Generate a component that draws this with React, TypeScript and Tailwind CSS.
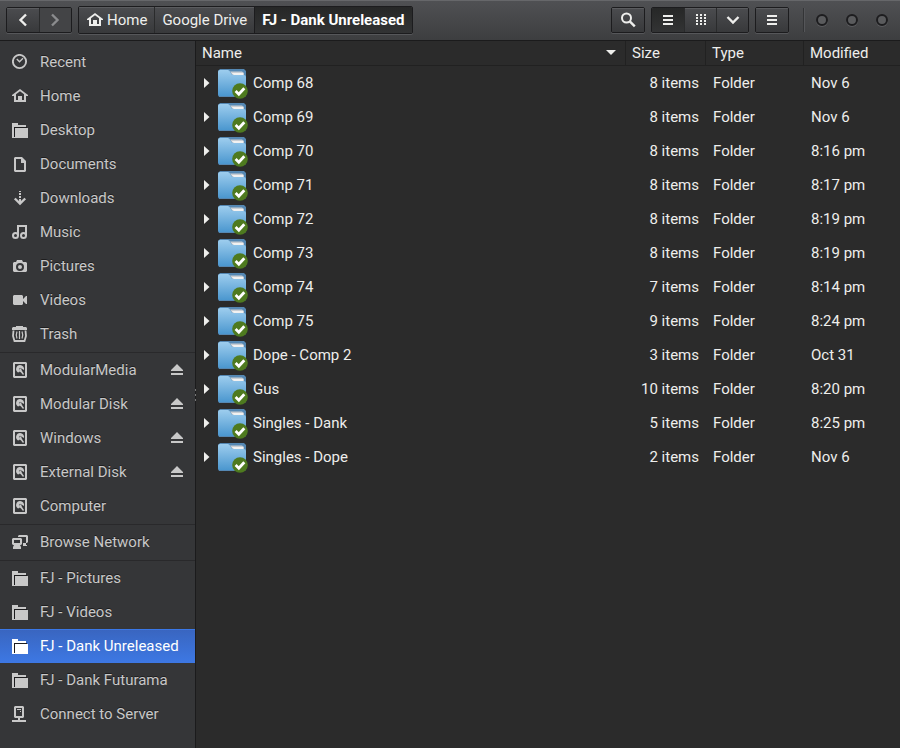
import { useState } from "react";
import type { ReactNode } from "react";
import clsx from "clsx";

const icons: Record<string, ReactNode> = {
    recent: (
        <>
            <circle cx="7.5" cy="7.5" r="6.6" fill="none" stroke="currentColor" strokeWidth="1.9" />
            <path d="M4.8 5l2.7 2.7L11 4.2" fill="none" stroke="currentColor" strokeWidth="1.4" />
        </>
    ),
    home: (
        <path d="M8 1L0 7v1h2v6h12V8h2V7zM8 3.2L12 6.3V12h-2V8H6v4H4V6.3z" fillRule="evenodd" />
    ),
    folder: (
        <>
            <path d="M0 1h6v2h8v2H2v10h1v1H0z" />
            <path d="M2 5h13v1H3v9H2z" fill="#1c1c1e" />
            <path d="M3 6h13v10H3z" />
        </>
    ),
    document: <path d="M3 1h7l4 4v10l-1 1H3l-1-1V2zM4 3v11h8V7H9V3z" fillRule="evenodd" />,
    download: (
        <>
            <path d="M7 1h2v1H7zM7 3h2v2H7zM7 6h2v2H7zM7 9h2v3H7z" />
            <path d="M2.8 8.5L8 13.5L13.2 8.5" fill="none" stroke="currentColor" strokeWidth="2.4" />
        </>
    ),
    music: (
        <>
            <path d="M5 1h10v11h-2V3H7v9H5z" />
            <circle cx="3.5" cy="11.5" r="2.5" fill="none" stroke="currentColor" strokeWidth="2" />
            <circle cx="11.5" cy="11.5" r="2.5" fill="none" stroke="currentColor" strokeWidth="2" />
        </>
    ),
    camera: (
        <path
            d="M5 2h5l1 2h3l1 1v8l-1 1H2l-1-1V5l1-1h2zM8 5a4 4 0 1 0 0 8a4 4 0 0 0 0-8zM8 7a2 2 0 1 1 0 4a2 2 0 0 1 0-4z"
            fillRule="evenodd"
        />
    ),
    video: <path d="M2 3h8l1 1v3l3-3h1v8h-1l-3-3v3l-1 1H2l-1-1V4z" />,
    trash: (
        <>
            <path d="M4 0h7v1h3l1 1v2H0V2l1-1h3z" />
            <path d="M1.5 4.5L1 10l1.5 5h10L14 10l-.5-5.5" fill="none" stroke="currentColor" strokeWidth="1.8" />
            <path d="M5 5.5q-1.5 3.5 0 7M7.5 5v8M10 5.5q1.500 3.5 0 7" fill="none" stroke="currentColor" strokeWidth="1.2" />
        </>
    ),
    disk: (
        <>
            <path d="M2 0h12l1 1v14l-1 1H2l-1-1V1zM3 2v12h10V2z" fillRule="evenodd" />
            <path d="M8 3a4 4 0 0 0-2 7.400l1.6-.4V8.3L6.8 7L8 5.8l1.3.8L12 8a4 4 0 0 0-4-5z" />
            <path d="M7.5 6.5H9L10 9l2 3l-1 1l-2-2.5L7 9z" />
        </>
    ),
    network: (
        <>
            <path d="M6 3V2l1-1h8l1 1v6l-1 1h-1v2h1v1h-4V9h3V3z" />
            <path d="M1 4h8l1 1v5l-1 1H8l1 2v2H1v-2l1-2H1l-1-1V5zM2 6v3h6V6z" fillRule="evenodd" />
        </>
    ),
    server: (
        <>
            <path d="M3 0h8l1 1v10l-1 1H8v2h6v2H0v-2h6v-2H3l-1-1V1zM4 2v8h6V2z" fillRule="evenodd" />
            <path d="M5 3h4v1H5zM8 5h1v1H8z" />
        </>
    ),
};

function Icon({ name }: { name: string }) {
    return (
        <svg className="size-4 shrink-0" viewBox="0 0 16 16" fill="currentColor" aria-hidden="true">
            {icons[name]}
        </svg>
    );
}

const places = [
    [
        { label: "Recent", icon: "recent" },
        { label: "Home", icon: "home" },
        { label: "Desktop", icon: "folder" },
        { label: "Documents", icon: "document" },
        { label: "Downloads", icon: "download" },
        { label: "Music", icon: "music" },
        { label: "Pictures", icon: "camera" },
        { label: "Videos", icon: "video" },
        { label: "Trash", icon: "trash" },
    ],
    [
        { label: "ModularMedia", icon: "disk", eject: true },
        { label: "Modular Disk", icon: "disk", eject: true },
        { label: "Windows", icon: "disk", eject: true },
        { label: "External Disk", icon: "disk", eject: true },
        { label: "Computer", icon: "disk" },
    ],
    [{ label: "Browse Network", icon: "network" }],
    [
        { label: "FJ - Pictures", icon: "folder" },
        { label: "FJ - Videos", icon: "folder" },
        { label: "FJ - Dank Unreleased", icon: "folder" },
        { label: "FJ - Dank Futurama", icon: "folder" },
        { label: "Connect to Server", icon: "server" },
    ],
] as { label: string; icon: string; eject?: boolean }[][];

const files = [
    { name: "Comp 68", size: "8 items", modified: "Nov 6" },
    { name: "Comp 69", size: "8 items", modified: "Nov 6" },
    { name: "Comp 70", size: "8 items", modified: "8:16 pm" },
    { name: "Comp 71", size: "8 items", modified: "8:17 pm" },
    { name: "Comp 72", size: "8 items", modified: "8:19 pm" },
    { name: "Comp 73", size: "8 items", modified: "8:19 pm" },
    { name: "Comp 74", size: "7 items", modified: "8:14 pm" },
    { name: "Comp 75", size: "9 items", modified: "8:24 pm" },
    { name: "Dope - Comp 2", size: "3 items", modified: "Oct 31" },
    { name: "Gus", size: "10 items", modified: "8:20 pm" },
    { name: "Singles - Dank", size: "5 items", modified: "8:25 pm" },
    { name: "Singles - Dope", size: "2 items", modified: "Nov 6" },
];

const group = "flex overflow-hidden rounded-xs border border-[#1c1c1e] text-[#eeeeec] shadow-[0_1px_0_#56575a]";
const raised = "bg-linear-to-b from-[#4b4c4f] to-[#38393b] shadow-[inset_0_1px_0_#5b5c5f]";
const pressed = "bg-linear-to-b from-[#262727] to-[#323334]";
const toolButton = "flex h-6 w-8 items-center justify-center";

function Toolbar() {
    const [view, setView] = useState("list");

    return (
        <header className="flex h-[41px] shrink-0 items-center border-b border-[#1b1b1c] bg-linear-to-b from-[#505154] to-[#3d3e40] px-1.5 shadow-[inset_0_1px_0_#66676a]">
            <div className={clsx(group, "mr-1.5")}>
                <button aria-label="Back" className={clsx(toolButton, raised)}>
                    <svg className="size-4" viewBox="0 0 16 16" fill="none" stroke="currentColor" strokeWidth="2.4">
                        <path d="M11 2.5L5.5 8l5.5 5.5" />
                    </svg>
                </button>
                <button aria-label="Forward" disabled className={clsx(toolButton, "border-l border-[#2a2b2c] bg-[#434446] text-[#8b8c8e]")}>
                    <svg className="size-4" viewBox="0 0 16 16" fill="none" stroke="currentColor" strokeWidth="2.4">
                        <path d="M4 2.5L9.5 8L4 13.5" />
                    </svg>
                </button>
            </div>

            <nav aria-label="Path" className={group}>
                <a href="#home" className={clsx("flex h-[26px] items-center gap-1 pr-[7px] pl-2", raised)}>
                    <Icon name="home" />
                    Home
                </a>
                <a href="#drive" className={clsx("flex h-[26px] items-center border-l border-[#2a2b2c] px-[7px]", raised)}>
                    Google Drive
                </a>
                <a
                    href="#current"
                    aria-current="page"
                    className={clsx("flex h-[26px] items-center border-l border-[#1c1c1e] px-[7px] font-bold text-white", pressed)}
                >
                    FJ - Dank Unreleased
                </a>
            </nav>

            <div className="ml-auto flex items-center gap-1.5">
                <div className={group}>
                    <button aria-label="Search" className={clsx(toolButton, raised)}>
                        <svg className="size-4" viewBox="0 0 16 16" fill="none" stroke="currentColor" strokeWidth="2">
                            <circle cx="6.5" cy="6" r="4.5" />
                            <path d="M9.8 9.3l5 5" strokeWidth="2.4" />
                        </svg>
                    </button>
                </div>
                <div className={group}>
                    <button
                        aria-label="List view"
                        aria-pressed={view === "list"}
                        onClick={() => setView("list")}
                        className={clsx(toolButton, view === "list" ? pressed : raised)}
                    >
                        <svg className="size-4" viewBox="0 0 16 16" fill="currentColor">
                            <path d="M3 3h10v2H3zM3 7h10v2H3zM3 11h10v2H3z" />
                        </svg>
                    </button>
                    <button
                        aria-label="Icon view"
                        aria-pressed={view === "grid"}
                        onClick={() => setView("grid")}
                        className={clsx(toolButton, "border-l border-[#2a2b2c]", view === "grid" ? pressed : raised)}
                    >
                        <svg className="size-4" viewBox="0 0 16 16" fill="currentColor">
                            {[2, 5, 8, 11].map((y) =>
                                [3, 7, 11].map((x) => <rect key={`${x}-${y}`} x={x} y={y} width="2" height="2" />)
                            )}
                        </svg>
                    </button>
                    <button aria-label="View options" className={clsx(toolButton, "border-l border-[#2a2b2c]", raised)}>
                        <svg className="size-4" viewBox="0 0 16 16" fill="none" stroke="currentColor" strokeWidth="2.4">
                            <path d="M2.5 5L8 10.5L13.5 5" />
                        </svg>
                    </button>
                </div>
                <div className={group}>
                    <button aria-label="Menu" className={clsx(toolButton, raised)}>
                        <svg className="size-4" viewBox="0 0 16 16" fill="currentColor">
                            <path d="M3 3h10v2H3zM3 7h10v2H3zM3 11h10v2H3z" />
                        </svg>
                    </button>
                </div>
            </div>

            <div className="ml-3.5 flex items-center gap-[18px] border-l border-[#333436] py-1.5 pr-1.5 pl-3 shadow-[inset_1px_0_0_#555659]">
                {["Minimize", "Maximize", "Close"].map((label) => (
                    <button
                        key={label}
                        aria-label={label}
                        className="size-3 rounded-full border-2 border-[#1d1d1f] bg-[#5a5b5d] shadow-[0_1px_0_#5a5b5e]"
                    />
                ))}
            </div>
        </header>
    );
}

function Sidebar() {
    const [current, setCurrent] = useState("FJ - Dank Unreleased");

    return (
        <aside className="relative w-[196px] shrink-0 border-r border-[#1b1b1c] bg-[#353638] pt-1">
            {places.map((section, i) => (
                <ul key={i} className={clsx(i > 0 && "mt-px border-t border-[#29292b]")}>
                    {section.map((place) => (
                        <li
                            key={place.label}
                            className={clsx(
                                "flex h-[34px] items-center px-3",
                                current === place.label
                                    ? "bg-linear-to-b from-[#3965bf] to-[#3d78e4] text-white shadow-[inset_0_1px_0_#3a78e8]"
                                    : "text-[#c8c8c8] text-shadow-[0_-1px_0_#1e1e1f]"
                            )}
                        >
                            <a
                                href={`#${place.label}`}
                                onClick={() => setCurrent(place.label)}
                                className="flex flex-1 items-center gap-3 whitespace-nowrap"
                            >
                                <Icon name={place.icon} />
                                {place.label}
                            </a>
                            {place.eject && (
                                <button aria-label={`Eject ${place.label}`}>
                                    <svg className="h-4 w-3" viewBox="0 0 12 16" fill="currentColor">
                                        <path d="M6 2l6 6v1H0V8zM0 11h12v2H0z" />
                                    </svg>
                                </button>
                            )}
                        </li>
                    ))}
                </ul>
            ))}
            {/* splitter grip */}
            <div className="absolute top-1/2 -right-px flex -translate-y-1/2 flex-col gap-[3px]">
                <span className="h-0.5 w-px bg-[#777]" />
                <span className="h-0.5 w-px bg-[#777]" />
                <span className="h-0.5 w-px bg-[#777]" />
            </div>
        </aside>
    );
}

function FolderIcon() {
    return (
        <svg className="h-8 w-8 shrink-0" viewBox="0 0 32 32" aria-hidden="true">
            <defs>
                <linearGradient id="folder" x1="0" y1="0" x2="0" y2="1">
                    <stop offset="0" stopColor="#9dcdee" />
                    <stop offset="1" stopColor="#4b97cf" />
                </linearGradient>
            </defs>
            <path d="M3 2h24l2 2v24l-1 2H2l-1-2V4z" fill="#5588b3" />
            <path d="M13 4.5h12l2 1.500V10H17z" fill="#c9ced3" />
            <path d="M14.500 6H26v2H17z" fill="#f1f1f1" />
            <path d="M3 3h8q1.500 0 2.500 2.500t3 2.500h10q2.500 0 2.500 2v17q0 2-2 2H3q-2 0-2-2V5q0-2 2-2z" fill="url(#folder)" />
            <circle cx="23" cy="24" r="7.8" fill="#4e7a1f" />
            <path d="M18.6 24l3.200 3.200l5.500-6" fill="none" stroke="#fff" strokeWidth="2.8" />
        </svg>
    );
}

function FileTable() {
    const heading = "border-b border-[#212121] pl-1.5 text-left font-normal";

    return (
        <main className="min-w-0 flex-1 bg-[#2b2b2b] text-[#eeeeec]">
            <table className="w-full table-fixed border-separate border-spacing-0">
                <colgroup>
                    <col />
                    <col className="w-20" />
                    <col className="w-[98px]" />
                    <col className="w-24" />
                </colgroup>
                <thead>
                    <tr className="h-[25px]">
                        <th aria-sort="descending" className={clsx(heading, "border-r")}>
                            <button className="flex w-full items-center justify-between pr-2">
                                Name
                                <svg className="h-1.5 w-3" viewBox="0 0 12 6" fill="currentColor">
                                    <path d="M1 0h10L6 5z" />
                                </svg>
                            </button>
                        </th>
                        <th className={clsx(heading, "border-r")}>Size</th>
                        <th className={clsx(heading, "border-r")}>Type</th>
                        <th className={heading}>Modified</th>
                    </tr>
                </thead>
                <tbody>
                    {files.map((file) => (
                        <tr key={file.name} className="h-[34px]">
                            <td className="pl-2">
                                <div className="flex items-center">
                                    <button aria-label={`Expand ${file.name}`} className="mr-[5px]">
                                        <svg className="h-3 w-2" viewBox="0 0 8 12" fill="currentColor">
                                            <path d="M0 1l5.5 5L0 11z" />
                                        </svg>
                                    </button>
                                    <FolderIcon />
                                    <span className="ml-1">{file.name}</span>
                                </div>
                            </td>
                            <td className="pr-[7px] text-right">{file.size}</td>
                            <td className="pl-[7px]">Folder</td>
                            <td className="pl-[7px]">{file.modified}</td>
                        </tr>
                    ))}
                </tbody>
            </table>
        </main>
    );
}

export default function App() {
    return (
        <div className="flex min-h-screen flex-col bg-[#2b2b2b] font-[Roboto,sans-serif] text-[15px] leading-5">
            <Toolbar />
            <div className="flex flex-1">
                <Sidebar />
                <FileTable />
            </div>
        </div>
    );
}
